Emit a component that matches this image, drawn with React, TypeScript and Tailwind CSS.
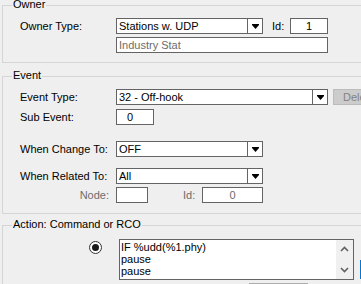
import React from "react";

const Arrow = () => (
  <svg width="7" height="5" viewBox="0 0 7 5" className="block">
    <rect x="0" y="0" width="7" height="1" fill="#000" />
    <polygon points="0,1 7,1 3.5,5" fill="#000" />
  </svg>
);

const Select = ({ value, w }: { value: string; w: string }) => (
  <div className={`flex h-[16px] ${w} border border-[#646464] bg-white`}>
    <div className="flex-1 pl-[2px] leading-[14px] text-black whitespace-nowrap overflow-hidden">{value}</div>
    <div className="flex w-[15px] items-center justify-center border-l border-[#646464]">
      <Arrow />
    </div>
  </div>
);

const Box = ({ children, w, cls = "" }: { children?: React.ReactNode; w: string; cls?: string }) => (
  <div className={`h-[16px] ${w} border border-[#646464] bg-white leading-[14px] whitespace-nowrap overflow-hidden ${cls}`}>{children}</div>
);

const Group = ({ title, children, cls }: { title: string; children: React.ReactNode; cls: string }) => (
  <div className={`relative ml-[2px] w-[420px] border border-[#d5d5d5] pl-[17px] ${cls}`}>
    <span className="absolute left-[9px] top-[-8px] bg-[#efefef] px-[1px] leading-[13px] text-black whitespace-nowrap">{title}</span>
    {children}
  </div>
);

const Label = ({ children, gray, right }: { children: React.ReactNode; gray?: boolean; right?: boolean }) => (
  <div className={`w-[96px] shrink-0 whitespace-nowrap ${gray ? "text-[#6d6d6d]" : "text-black"} ${right ? "pr-[7px] text-right" : ""}`}>{children}</div>
);

export default function App() {
  return (
    <div
      className="w-[361px] h-[284px] overflow-hidden bg-[#efefef] pt-[5px] text-[11px] leading-[13px]"
      style={{ fontFamily: '"Liberation Sans", Arial, sans-serif' }}
    >
      <Group title="Owner" cls="pt-[12px] pb-[9px]">
        <div className="flex h-[16px] items-center">
          <Label>Owner Type:</Label>
          <Select value="Stations w. UDP" w="w-[147px]" />
          <span className="ml-[9px] w-[18px] text-black">Id:</span>
          <Box w="w-[38px]" cls="text-center text-black">1</Box>
        </div>
        <div className="mt-[3px] ml-[96px]">
          <Box w="w-[212px]" cls="pl-[2px] text-[#6d6d6d]">Industry Stat</Box>
        </div>
      </Group>

      <Group title="Event" cls="mt-[13px] pt-[12px] pb-[10px]">
        <div className="flex h-[16px] items-center">
          <Label>Event Type:</Label>
          <Select value="32 - Off-hook" w="w-[212px]" />
          <div className="ml-[5px] h-[16px] w-[60px] border border-[#bcbcbc] bg-[#cccccc] pl-[9px] leading-[14px] text-[#838383]">Delete</div>
        </div>
        <div className="mt-[4px] flex h-[16px] items-center">
          <Label>Sub Event:</Label>
          <Box w="w-[38px]" cls="pl-[10px] text-black">0</Box>
        </div>
        <div className="mt-[16px] flex h-[16px] items-center">
          <Label>When Change To:</Label>
          <Select value="OFF" w="w-[147px]" />
        </div>
        <div className="mt-[11px] flex h-[16px] items-center">
          <Label>When Related To:</Label>
          <Select value="All" w="w-[147px]" />
        </div>
        <div className="mt-[3px] flex h-[16px] items-center">
          <Label gray right>Node:</Label>
          <Box w="w-[32px]" />
          <span className="ml-[35px] w-[19px] text-[#6d6d6d]">Id:</span>
          <Box w="w-[61px]" cls="text-center text-[#6d6d6d]">0</Box>
        </div>
      </Group>

      <Group title="Action: Command or RCO" cls="mt-[11px] pt-[13px] pb-[10px] !pl-0">
        <div className="flex items-start">
          <div className="ml-[86px] mt-[2px] flex h-[13px] w-[13px] items-center justify-center rounded-full border border-[#333333] bg-white">
            <div className="h-[7px] w-[7px] rounded-full bg-[#1a1a1a]" />
          </div>
          <div className="ml-[17px] flex h-[41px] w-[235px] border border-[#646464] bg-white">
            <div className="flex-1 pl-[1px] pt-[1px] leading-[12px] text-black whitespace-nowrap">
              <div>IF %udd(%1.phy)</div>
              <div>pause</div>
              <div>pause</div>
            </div>
            <div className="flex w-[17px] flex-col items-center justify-between bg-[#f0f0f0] py-[6px]">
              <svg width="9" height="6" viewBox="0 0 9 6">
                <polyline points="1,5 4.5,1.5 8,5" fill="none" stroke="#606060" strokeWidth="1.6" />
              </svg>
              <svg width="9" height="6" viewBox="0 0 9 6">
                <polyline points="1,1 4.5,4.5 8,1" fill="none" stroke="#606060" strokeWidth="1.6" />
              </svg>
            </div>
          </div>
          <div className="ml-[6px] mt-[21px] h-[19px] w-[12px] border-2 border-[#0078d7] bg-white p-[1px]">
            <div className="h-full w-full border border-dotted border-[#000]" />
          </div>
        </div>
        <div className="ml-[246px] mt-[3px] w-[59px] border-t border-[#adadad]" />
      </Group>
    </div>
  );
}
